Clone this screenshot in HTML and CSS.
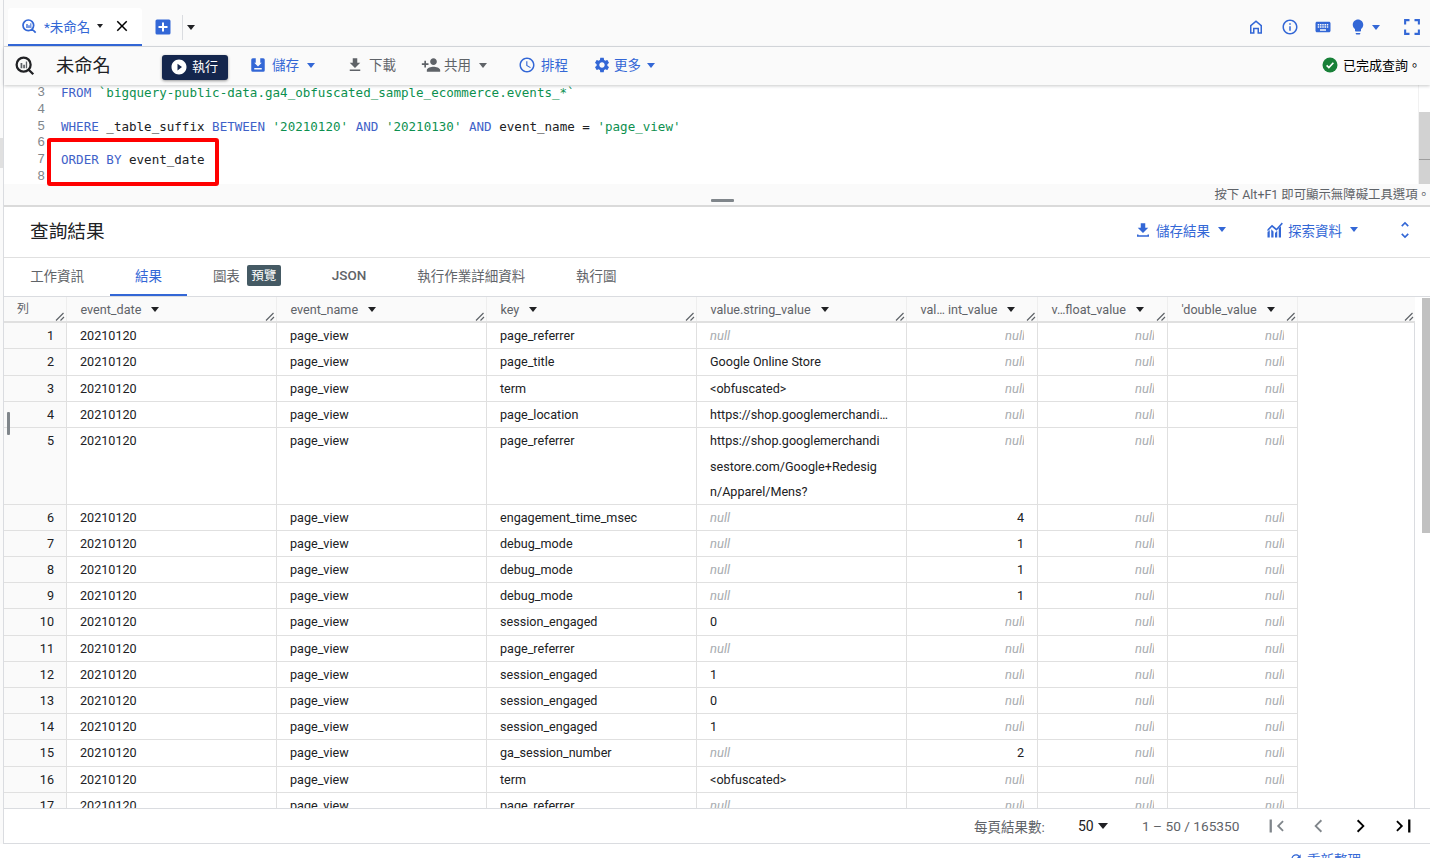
FILE: index.html
```html
<!DOCTYPE html>
<html lang="zh-Hant">
<head>
<meta charset="utf-8">
<title>BigQuery</title>
<link rel="stylesheet" href="styles.css">
</head>
<body>
<svg class="defs" width="0" height="0" aria-hidden="true">
  <symbol id="grip" viewBox="0 0 10 10"><path d="M1 9.5L8.5 2M5.5 9.5L9 6" fill="none" stroke="#5f6368" stroke-width="1.2"/></symbol>
</svg>
<div class="page">
  <div class="rail"><div class="rail-block"></div></div>
  <div class="workspace">
    <header class="tabbar">
      <div class="qtab">
        <svg class="i16" viewBox="0 0 24 24"><path fill="none" stroke="#3367d6" stroke-width="2.6" d="M11 3a8 8 0 1 0 0 16 8 8 0 0 0 0-16zM16.5 16.5L22 22"/><path fill="#3367d6" d="M8 9h2v6H8zM11 11h2v4h-2zM14 8h1.5v7H14z"/></svg>
        <span class="qtab-name">*未命名</span>
        <span class="tri tri-s tri-dark"></span>
        <svg class="qtab-x" viewBox="0 0 24 24"><path d="M19 6.4L17.6 5 12 10.6 6.4 5 5 6.4 10.6 12 5 17.6 6.4 19 12 13.4 17.6 19 19 17.6 13.4 12z" fill="#000"/></svg>
      </div>
      <svg class="plus" viewBox="0 0 16 16"><rect x="0.5" y="0.5" width="15" height="15" rx="1.5" fill="#3367d6"/><path d="M7 3.5h2V7h3.500v2H9v3.500H7V9H3.500V7H7z" fill="#fff"/></svg>
      <span class="vdiv"></span>
      <span class="tri tri-dark plus-tri"></span>
      <nav class="top-icons">
        <svg class="i18" viewBox="0 0 24 24"><path fill="#3367d6" d="M12 3L4 9.500V21h6v-6h4v6h6V9.500L12 3zm6 16h-2v-6H8v6H6v-8.500l6-4.900 6 4.900V19z"/></svg>
        <svg class="i18 ti-info" viewBox="0 0 24 24"><path fill="#3367d6" d="M11 7h2v2h-2zm0 4h2v6h-2zm1-9C6.480 2 2 6.480 2 12s4.480 10 10 10 10-4.480 10-10S17.520 2 12 2zm0 18c-4.410 0-8-3.590-8-8s3.590-8 8-8 8 3.590 8 8-3.590 8-8 8z"/></svg>
        <svg class="i18 ti-key" viewBox="0 0 24 24"><path fill="#3367d6" d="M20 5H4c-1.100 0-1.990.9-1.990 2L2 17c0 1.100.9 2 2 2h16c1.100 0 2-.9 2-2V7c0-1.100-.9-2-2-2zm-9 3h2v2h-2V8zm0 3h2v2h-2v-2zM8 8h2v2H8V8zm0 3h2v2H8v-2zm-1 2H5v-2h2v2zm0-3H5V8h2v2zm9 7H8v-2h8v2zm0-4h-2v-2h2v2zm0-3h-2V8h2v2zm3 3h-2v-2h2v2zm0-3h-2V8h2v2z"/></svg>
        <svg class="i18 ti-bulb" viewBox="0 0 24 24"><path fill="#3367d6" d="M9 21c0 .55.45 1 1 1h4c.55 0 1-.45 1-1v-1H9v1zm3-19C8.140 2 5 5.140 5 9c0 2.380 1.190 4.470 3 5.740V17c0 .55.45 1 1 1h6c.55 0 1-.45 1-1v-2.260c1.810-1.270 3-3.360 3-5.740 0-3.860-3.140-7-7-7z"/></svg>
        <span class="tri ti-tri"></span>
        <svg class="i20 ti-full" viewBox="0 0 24 24"><path fill="#3367d6" d="M5 15H2.500v6.500H9V19H5v-4zM2.500 9H5V5h4V2.500H2.500V9zM19 19h-4v2.500h6.500V15H19v4zM15 2.500V5h4v4h2.500V2.500H15z"/></svg>
      </nav>
    </header>

    <section class="toolbar">
      <svg class="bq" viewBox="0 0 24 24"><path fill="none" stroke="#202124" stroke-width="2.600" d="M11 3a8 8 0 1 0 0 16 8 8 0 0 0 0-16zM16.500 16.500L22 22"/><path fill="#5f6368" d="M7.500 9h2v6h-2zM10.500 11h2v4h-2zM13.500 7.500h1.500V15h-1.500z"/></svg>
      <h1 class="title">未命名</h1>
      <button class="run"><svg class="i18" viewBox="0 0 24 24"><path fill="#fff" d="M12 2C6.480 2 2 6.480 2 12s4.480 10 10 10 10-4.480 10-10S17.520 2 12 2zm-2 14.500v-9l6 4.500-6 4.500z"/></svg><span class="run-label">執行</span></button>
      <span class="tool t-save"><svg class="i18" viewBox="0 0 24 24"><path fill="#3367d6" fill-rule="evenodd" d="M5 3h4v6H7l5 5 5-5h-2V3h4a2 2 0 0 1 2 2v14a2 2 0 0 1-2 2H5a2 2 0 0 1-2-2V5a2 2 0 0 1 2-2zm2 13v2h10v-2z"/></svg><span class="lbl">儲存</span><span class="tri"></span></span>
      <span class="tool off t-down"><svg class="i18" viewBox="0 0 24 24"><path fill="#5f6368" d="M19 9h-4V3H9v6H5l7 7 7-7zM5 18v2h14v-2H5z"/></svg><span class="lbl">下載</span></span>
      <span class="tool off t-share"><svg class="i20" viewBox="0 0 24 24"><path fill="#5f6368" d="M15 12c2.210 0 4-1.790 4-4s-1.790-4-4-4-4 1.790-4 4 1.790 4 4 4zm-9-2V7H4v3H1v2h3v3h2v-3h3v-2H6zm9 4c-2.670 0-8 1.340-8 4v2h16v-2c0-2.660-5.330-4-8-4z"/></svg><span class="lbl lbl-share">共用</span><span class="tri tri-grey"></span></span>
      <span class="tool t-sched"><svg class="i18" viewBox="0 0 24 24"><path fill="#3367d6" d="M11.990 2C6.470 2 2 6.480 2 12s4.470 10 9.990 10C17.520 22 22 17.520 22 12S17.520 2 11.990 2zM12 20c-4.420 0-8-3.580-8-8s3.580-8 8-8 8 3.580 8 8-3.580 8-8 8zm.5-13H11v6l5.250 3.150.75-1.230-4.500-2.670z"/></svg><span class="lbl">排程</span></span>
      <span class="tool t-more"><svg class="i18" viewBox="0 0 24 24"><path fill="#3367d6" d="M19.140 12.940c.04-.3.06-.61.06-.94 0-.32-.02-.64-.07-.94l2.030-1.580c.18-.14.23-.41.12-.61l-1.920-3.320c-.12-.22-.37-.29-.59-.22l-2.390.96c-.5-.38-1.030-.7-1.620-.94l-.36-2.540c-.04-.24-.24-.41-.48-.41h-3.840c-.24 0-.43.17-.47.41l-.36 2.540c-.59.24-1.130.57-1.620.94l-2.390-.96c-.22-.08-.47 0-.59.22L2.740 8.870c-.12.21-.08.47.12.61l2.030 1.580c-.05.3-.09.63-.09.94s.02.64.07.94l-2.030 1.580c-.18.14-.23.41-.12.61l1.920 3.320c.12.22.37.29.59.22l2.390-.96c.5.38 1.030.7 1.620.94l.36 2.540c.05.24.24.41.48.41h3.840c.24 0 .44-.17.47-.41l.36-2.540c.59-.24 1.130-.56 1.620-.94l2.390.96c.22.08.47 0 .59-.22l1.920-3.320c.12-.22.07-.47-.12-.61l-2.010-1.580zM12 15.600c-1.980 0-3.600-1.620-3.600-3.600s1.620-3.600 3.600-3.600 3.600 1.620 3.600 3.600-1.620 3.600-3.600 3.600z"/></svg><span class="lbl">更多</span><span class="tri"></span></span>
      <span class="status"><svg class="i18" viewBox="0 0 24 24"><circle cx="12" cy="12" r="10" fill="#188038"/><path fill="none" stroke="#fff" stroke-width="2.200" d="M7.500 12.500l3 3 6-6.500"/></svg><span class="lbl">已完成查詢。</span></span>
    </section>

    <section class="editor">
      <div class="gutter"><div>3</div><div>4</div><div>5</div><div>6</div><div>7</div><div>8</div></div>
      <div class="code">
        <div><b>FROM</b> <i>`bigquery-public-data.ga4_obfuscated_sample_ecommerce.events_*`</i></div>
        <div>&nbsp;</div>
        <div><b>WHERE</b> _table_suffix <b>BETWEEN</b> <i>'20210120'</i> <b>AND</b> <i>'20210130'</i> <b>AND</b> event_name = <i>'page_view'</i></div>
        <div>&nbsp;</div>
        <div><b>ORDER BY</b> event_date</div>
        <div>&nbsp;</div>
      </div>
      <div class="ed-scroll"><div class="ed-thumb"></div></div>
    </section>
    <div class="hint">按下 Alt+F1 即可顯示無障礙工具選項。</div>

    <section class="res-head">
      <h2 class="res-title">查詢結果</h2>
      <span class="res-act a-save"><svg class="i18" viewBox="0 0 24 24"><path fill="#3367d6" d="M19 9h-4V3H9v6H5l7 7 7-7zM4 18v3h16v-3h-2v1H6v-1z"/></svg><span>儲存結果</span><span class="tri"></span></span>
      <span class="res-act a-exp"><svg class="i18" viewBox="0 0 24 24"><path fill="#3367d6" d="M2 22v-7l3-3v10zM7 22V11l3 3v8zM12 22v-6l3-3v9zM17 22V10l3-3v15zM2 11l6-6 6 5 7-8 1.500 1.500L14 13 8 8l-6 6z"/></svg><span>探索資料</span><span class="tri"></span></span>
      <svg class="i20 a-fold" viewBox="0 0 24 24"><path fill="#3367d6" d="M12 4.830L15.170 8l1.410-1.410L12 2 7.410 6.590 8.830 8 12 4.830zm0 14.340L8.830 16l-1.410 1.410L12 22l4.590-4.590L15.170 16 12 19.170z"/></svg>
    </section>

    <nav class="tabs">
      <span class="tab">工作資訊</span>
      <span class="tab active">結果</span>
      <span class="tab">圖表<em class="badge">預覽</em></span>
      <span class="tab json">JSON</span>
      <span class="tab">執行作業詳細資料</span>
      <span class="tab">執行圖</span>
    </nav>

    <section class="grid-wrap">
      <div class="grid">
        <div class="row head">
          <div class="c num-h">列<svg class="grip"><use href="#grip"/></svg></div>
          <div class="c">event_date<span class="tri tri-dark"></span><svg class="grip"><use href="#grip"/></svg></div>
          <div class="c">event_name<span class="tri tri-dark"></span><svg class="grip"><use href="#grip"/></svg></div>
          <div class="c">key<span class="tri tri-dark"></span><svg class="grip"><use href="#grip"/></svg></div>
          <div class="c">value.string_value<span class="tri tri-dark"></span><svg class="grip"><use href="#grip"/></svg></div>
          <div class="c">val… int_value<span class="tri tri-dark"></span><svg class="grip"><use href="#grip"/></svg></div>
          <div class="c">v…float_value<span class="tri tri-dark"></span><svg class="grip"><use href="#grip"/></svg></div>
          <div class="c">'double_value<span class="tri tri-dark"></span><svg class="grip"><use href="#grip"/></svg></div>
          <div class="c last">&nbsp;<svg class="grip"><use href="#grip"/></svg></div>
        </div>
        <div class="row"><div class="c num">1</div><div class="c">20210120</div><div class="c">page_view</div><div class="c">page_referrer</div><div class="c"><span class="nl">null</span></div><div class="c r"><span class="nr">null</span></div><div class="c r"><span class="nr">null</span></div><div class="c r"><span class="nr">null</span></div></div>
        <div class="row"><div class="c num">2</div><div class="c">20210120</div><div class="c">page_view</div><div class="c">page_title</div><div class="c">Google Online Store</div><div class="c r"><span class="nr">null</span></div><div class="c r"><span class="nr">null</span></div><div class="c r"><span class="nr">null</span></div></div>
        <div class="row"><div class="c num">3</div><div class="c">20210120</div><div class="c">page_view</div><div class="c">term</div><div class="c">&lt;obfuscated&gt;</div><div class="c r"><span class="nr">null</span></div><div class="c r"><span class="nr">null</span></div><div class="c r"><span class="nr">null</span></div></div>
        <div class="row"><div class="c num">4</div><div class="c">20210120</div><div class="c">page_view</div><div class="c">page_location</div><div class="c">https://shop.googlemerchandi…</div><div class="c r"><span class="nr">null</span></div><div class="c r"><span class="nr">null</span></div><div class="c r"><span class="nr">null</span></div></div>
        <div class="row tall"><div class="c num">5</div><div class="c">20210120</div><div class="c">page_view</div><div class="c">page_referrer</div><div class="c">https://shop.googlemerchandi<br>sestore.com/Google+Redesig<br>n/Apparel/Mens?</div><div class="c r"><span class="nr">null</span></div><div class="c r"><span class="nr">null</span></div><div class="c r"><span class="nr">null</span></div></div>
        <div class="row"><div class="c num">6</div><div class="c">20210120</div><div class="c">page_view</div><div class="c">engagement_time_msec</div><div class="c"><span class="nl">null</span></div><div class="c r">4</div><div class="c r"><span class="nr">null</span></div><div class="c r"><span class="nr">null</span></div></div>
        <div class="row"><div class="c num">7</div><div class="c">20210120</div><div class="c">page_view</div><div class="c">debug_mode</div><div class="c"><span class="nl">null</span></div><div class="c r">1</div><div class="c r"><span class="nr">null</span></div><div class="c r"><span class="nr">null</span></div></div>
        <div class="row"><div class="c num">8</div><div class="c">20210120</div><div class="c">page_view</div><div class="c">debug_mode</div><div class="c"><span class="nl">null</span></div><div class="c r">1</div><div class="c r"><span class="nr">null</span></div><div class="c r"><span class="nr">null</span></div></div>
        <div class="row"><div class="c num">9</div><div class="c">20210120</div><div class="c">page_view</div><div class="c">debug_mode</div><div class="c"><span class="nl">null</span></div><div class="c r">1</div><div class="c r"><span class="nr">null</span></div><div class="c r"><span class="nr">null</span></div></div>
        <div class="row"><div class="c num">10</div><div class="c">20210120</div><div class="c">page_view</div><div class="c">session_engaged</div><div class="c">0</div><div class="c r"><span class="nr">null</span></div><div class="c r"><span class="nr">null</span></div><div class="c r"><span class="nr">null</span></div></div>
        <div class="row"><div class="c num">11</div><div class="c">20210120</div><div class="c">page_view</div><div class="c">page_referrer</div><div class="c"><span class="nl">null</span></div><div class="c r"><span class="nr">null</span></div><div class="c r"><span class="nr">null</span></div><div class="c r"><span class="nr">null</span></div></div>
        <div class="row"><div class="c num">12</div><div class="c">20210120</div><div class="c">page_view</div><div class="c">session_engaged</div><div class="c">1</div><div class="c r"><span class="nr">null</span></div><div class="c r"><span class="nr">null</span></div><div class="c r"><span class="nr">null</span></div></div>
        <div class="row"><div class="c num">13</div><div class="c">20210120</div><div class="c">page_view</div><div class="c">session_engaged</div><div class="c">0</div><div class="c r"><span class="nr">null</span></div><div class="c r"><span class="nr">null</span></div><div class="c r"><span class="nr">null</span></div></div>
        <div class="row"><div class="c num">14</div><div class="c">20210120</div><div class="c">page_view</div><div class="c">session_engaged</div><div class="c">1</div><div class="c r"><span class="nr">null</span></div><div class="c r"><span class="nr">null</span></div><div class="c r"><span class="nr">null</span></div></div>
        <div class="row"><div class="c num">15</div><div class="c">20210120</div><div class="c">page_view</div><div class="c">ga_session_number</div><div class="c"><span class="nl">null</span></div><div class="c r">2</div><div class="c r"><span class="nr">null</span></div><div class="c r"><span class="nr">null</span></div></div>
        <div class="row"><div class="c num">16</div><div class="c">20210120</div><div class="c">page_view</div><div class="c">term</div><div class="c">&lt;obfuscated&gt;</div><div class="c r"><span class="nr">null</span></div><div class="c r"><span class="nr">null</span></div><div class="c r"><span class="nr">null</span></div></div>
        <div class="row"><div class="c num">17</div><div class="c">20210120</div><div class="c">page_view</div><div class="c">page_referrer</div><div class="c"><span class="nl">null</span></div><div class="c r"><span class="nr">null</span></div><div class="c r"><span class="nr">null</span></div><div class="c r"><span class="nr">null</span></div></div>
      </div>
      <div class="vscroll"><div class="vthumb"></div></div>
    </section>

    <footer class="pager">
      <span class="per">每頁結果數:</span>
      <span class="size">50</span><span class="tri tri-dark tri-l"></span>
      <span class="range">1 – 50 / 165350</span>
      <svg class="pg pg-first" viewBox="0 0 24 24"><path fill="#80868b" d="M20.410 16.590L15.820 12l4.590-4.590L19 6l-6 6 6 6zM5 5h2.500v14H5z"/></svg>
      <svg class="pg pg-prev" viewBox="0 0 24 24"><path fill="#80868b" d="M16.410 6.410L15 5l-7 7 7 7 1.410-1.410L10.830 12z"/></svg>
      <svg class="pg pg-next" viewBox="0 0 24 24"><path fill="#000" d="M9 5L7.590 6.410 13.170 12l-5.580 5.590L9 19l7-7z"/></svg>
      <svg class="pg pg-last" viewBox="0 0 24 24"><path fill="#000" d="M3.590 7.410L8.180 12l-4.590 4.590L5 18l6-6-6-6zM16.500 5H19v14h-2.500z"/></svg>
    </footer>
  </div>
</div>
<div class="below">
  <svg class="i14" viewBox="0 0 24 24"><path fill="#3367d6" d="M17.650 6.350C16.200 4.900 14.210 4 12 4c-4.420 0-7.990 3.580-7.990 8s3.570 8 7.990 8c3.730 0 6.840-2.550 7.730-6h-2.080c-.82 2.330-3.040 4-5.650 4-3.310 0-6-2.690-6-6s2.690-6 6-6c1.660 0 3.140.69 4.220 1.780L13 11h7V4l-2.350 2.350z"/></svg>
  <span>重新整理</span>
</div>
<div class="annot"></div>
<div class="split-h"></div>
<div class="split-v"></div>
</body>
</html>
```

FILE: styles.css
```css
* { box-sizing: border-box; }
html, body { margin: 0; padding: 0; height: 858px; overflow: hidden; background: #fff; }
body {
  font-family: Roboto, "Noto Sans CJK TC", sans-serif;
  font-size: 12.6px;
  color: #202124;
  position: relative;
}
.defs { position: absolute; }
svg { display: block; flex: none; }
.i14 { width: 14px; height: 14px; }
.i16 { width: 16px; height: 16px; }
.i18 { width: 18px; height: 18px; }
.i20 { width: 20px; height: 20px; }

.tri {
  display: inline-block;
  flex: none;
  width: 0;
  height: 0;
  border-left: 4.5px solid transparent;
  border-right: 4.5px solid transparent;
  border-top: 5px solid #3367d6;
}
.tri-grey { border-top-color: #5f6368; }
.tri-dark { border-top-color: #202124; }
.tri-s { border-left-width: 3.5px; border-right-width: 3.5px; border-top-width: 4px; }

.page { display: flex; height: 844px; }
.rail { width: 3px; flex: none; background: #fafafa; padding-top: 138px; }
.rail-block { height: 30px; background: #e0e0e0; }
.workspace {
  width: 1427px;
  display: flex;
  flex-direction: column;
  border-left: 1px solid #dadce0;
  border-bottom: 1px solid #dadce0;
}

/* top tab strip */
.tabbar {
  height: 47px;
  flex: none;
  display: flex;
  align-items: center;
  padding: 8px 0 0 4px;
  background: #fafafa;
  border-bottom: 1px solid #dadce0;
}
.qtab {
  width: 134px;
  height: 38px;
  display: flex;
  align-items: center;
  padding: 0 0 0 13px;
  background: #fff;
  border-bottom: 2px solid #3367d6;
  border-radius: 3px 3px 0 0;
}
.qtab-name { margin-left: 7px; font-size: 13.5px; color: #3367d6; }
.qtab .tri { margin-left: 7px; }
.qtab-x { width: 18px; height: 18px; margin-left: 10px; }
.plus { width: 16px; height: 16px; margin-left: 13px; }
.vdiv { width: 1px; height: 25px; background: #dadce0; margin-left: 11px; }
.plus-tri { margin-left: 4px; }
.top-icons { margin-left: auto; display: flex; align-items: center; }
.ti-info { margin-left: 15.500px; }
.ti-key { margin-left: 15.500px; }
.ti-bulb { margin-left: 17px; }
.ti-tri { margin-left: 5px; }
.ti-full { margin: 0 8px 0 22px; }

/* query toolbar */
.toolbar {
  height: 38px;
  flex: none;
  display: flex;
  align-items: center;
  padding: 0 0 2px 10px;
  background: #fafafa;
  font-size: 13.5px;
  box-shadow: 0 1px 3px rgba(60, 64, 67, .28);
  position: relative;
  z-index: 2;
}
.bq { width: 21px; height: 21px; }
.title { margin: 0 0 3px 21px; font-size: 18.3px; font-weight: 400; width: 106px; }
.run {
  width: 66px;
  height: 25px;
  margin-top: 4px;
  padding: 0 0 0 8px;
  display: flex;
  align-items: center;
  gap: 4px;
  border: 0;
  border-radius: 3px;
  background: #14264d;
  color: #fff;
  font: inherit;
  font-size: 13px;
  box-shadow: 0 1px 3px rgba(0, 0, 0, .4);
}
.run-label { margin-bottom: 3px; }
.lbl { margin-bottom: 2px; }
.tool { display: flex; align-items: center; gap: 5px; color: #3367d6; }
.tool .tri { margin-left: 3px; }
.tool.off { color: #5f6368; }
.t-save { margin-left: 21px; }
.t-down { margin-left: 31px; }
.t-share { margin-left: 25px; }
.lbl-share { margin-left: -2px; }
.t-sched { margin-left: 31px; }
.t-more { margin-left: 25px; gap: 3px; }
.status { margin-left: auto; display: flex; align-items: center; gap: 4px; font-size: 13px; color: #000; padding-right: 9px; }

/* editor */
.editor {
  height: 99px;
  flex: none;
  display: flex;
  background: #fff;
  font-family: "DejaVu Sans Mono", monospace;
  font-size: 12.56px;
  line-height: 16.750px;
  overflow: hidden;
}
.gutter { width: 41px; text-align: right; color: #80868b; font-family: "Liberation Mono", monospace; font-size: 13px; }
.code { margin-left: 16px; flex: 1; white-space: nowrap; color: #202124; }
.code b { font-weight: 400; color: #3f62c8; }
.code i { font-style: normal; color: #0d904f; }
.ed-scroll { width: 12px; flex: none; padding-top: 27px; border-left: 1px solid #f1f1f1; }
.ed-thumb { height: 72px; background: linear-gradient(#d2d2d2 0 47px, #9e9e9e 47px 48px, #d2d2d2 48px); }
.hint {
  flex: none;
  background: #fafafa;
  text-align: right;
  white-space: nowrap;
  color: #5f6368;
  font-size: 12.4px;
  line-height: 22px;
  overflow: hidden;
  border-bottom: 2px solid #dadada;
  height: 23px;
}

/* results header */
.res-head {
  height: 51px;
  flex: none;
  display: flex;
  align-items: center;
  padding: 0 0 5px 26px;
  border-bottom: 1px solid #e0e0e0;
  background: #fff;
}
.res-title { margin: 0 auto 0 0; font-size: 18.7px; font-weight: 400; color: #202124; }
.res-act { display: flex; align-items: center; gap: 4px; color: #3367d6; font-size: 13.5px; }
.res-act .tri { margin-left: 4px; }
.a-save { margin-right: 40px; }
.a-exp { margin-right: 37px; }
.a-fold { margin-right: 15px; }

/* tabs */
.tabs {
  height: 39px;
  flex: none;
  display: flex;
  padding-left: 0.7px;
  font-size: 13.5px;
  color: #5f6368;
  border-bottom: 1px solid #dadce0;
}
.tab { display: flex; align-items: center; padding: 0 25.450px 2px; height: 38px; border-bottom: 2px solid transparent; }
.tab.active { color: #3367d6; border-bottom-color: #3367d6; }
.json { font-weight: 500; font-size: 13.5px; }
.badge {
  margin-left: 7px;
  width: 34px;
  height: 21px;
  line-height: 22px;
  text-align: center;
  font-style: normal;
  font-size: 12.5px;
  color: #fff;
  background: #455a64;
  border-radius: 2px;
}

/* result grid */
.grid-wrap { flex: 1; min-height: 0; display: flex; overflow: hidden; background: #fff; }
.grid { width: 1411px; flex: none; border-right: 1px solid #dadce0; }
.row {
  display: grid;
  grid-template-columns: 63px 210px 210px 210px 210px 131px 130px 130px;
  width: 1294px;
  height: 26.200px;
  border-bottom: 1px solid #e0e0e0;
  line-height: 25.500px;
  white-space: nowrap;
}
.row.tall { height: 76.600px; }
.row.head {
  grid-template-columns: 63px 210px 210px 210px 210px 131px 130px 130px 117px;
  width: 1411px;
  height: 26.300px;
  background: #fafafa;
  color: #5f6368;
  border-bottom: 2px solid #e0e0e0;
}
.c { padding: 0 13px; border-right: 1px solid #e0e0e0; overflow: hidden; position: relative; }
.head .c { padding: 1px 13px 0 13.500px; border-right-color: #eee; display: flex; align-items: center; }
.head .tri { margin-left: 10px; }
.head .last { border-right: 0; }
.head .num-h { padding-left: 13px; font-size: 12px; }
.grip { position: absolute; right: 1px; bottom: 0; width: 10px; height: 10px; }
.num { background: #fafafa; text-align: right; padding-right: 12px; }
.r { text-align: right; }
.nl, .nr { font-style: italic; color: #a8acb0; font-size: 13px; }
.nr { display: inline-block; width: 19px; overflow: hidden; vertical-align: top; text-align: left; }

.vscroll { flex: 1; padding: 1px 0 0 7px; }
.vthumb { width: 8px; height: 235px; background: #c1c1c1; }

/* pager */
.pager {
  height: 35px;
  flex: none;
  display: flex;
  align-items: center;
  border-top: 1px solid #dadce0;
  background: #fff;
  position: relative;
  font-size: 13.5px;
}
.per { margin-left: 970px; width: 104px; color: #5f6368; }
.size { width: 20px; color: #202124; font-size: 14px; }
.tri-l { border-left-width: 5.500px; border-right-width: 5.500px; border-top-width: 6px; }
.range { margin-left: 34px; width: 123px; color: #5f6368; font-size: 13.7px; }
.pg { width: 22px; height: 22px; }
.pg-prev { margin-left: 20px; }
.pg-next { margin-left: 21px; }
.pg-last { margin-left: 21px; }

.below {
  height: 14px;
  padding: 8px 0 0 1289px;
  display: flex;
  gap: 4px;
  color: #3367d6;
  font-size: 13.5px;
  line-height: 16px;
  overflow: hidden;
}

/* overlays */
.annot {
  position: absolute;
  left: 47px;
  top: 138px;
  width: 172px;
  height: 48px;
  border: 4px solid #f00;
  border-radius: 3px;
}
.split-h { position: absolute; left: 711px; top: 199px; width: 23px; height: 3px; background: #80868b; border-radius: 1px; }
.split-v { position: absolute; left: 7px; top: 412px; width: 3px; height: 23px; background: #80868b; border-radius: 1px; }
```
